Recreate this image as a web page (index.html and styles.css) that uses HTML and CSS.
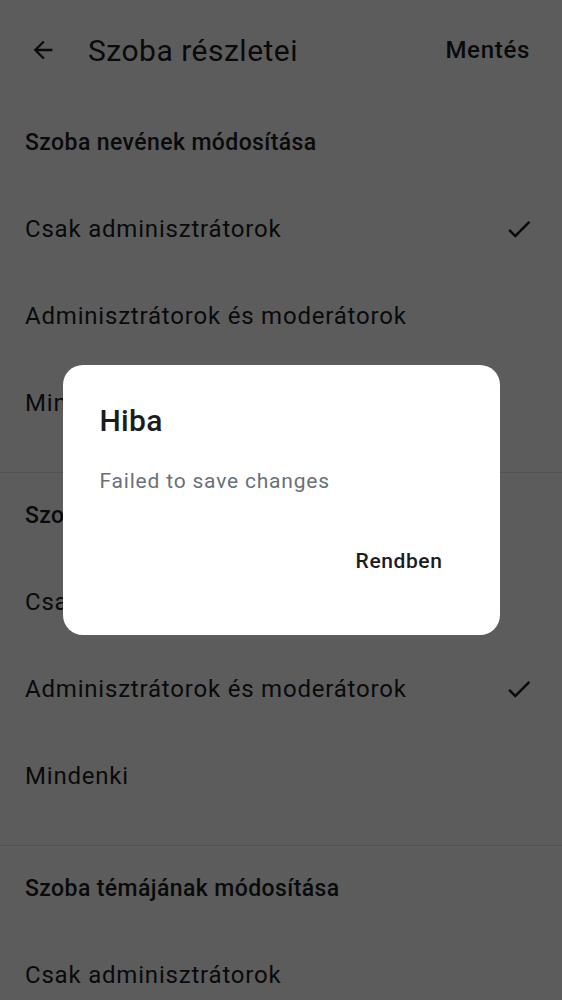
FILE: index.html
```html
<!DOCTYPE html>
<html lang="hu">
<head>
<meta charset="utf-8">
<link rel="stylesheet" href="styles.css">
</head>
<body>
<div class="page">
  <header class="topbar">
    <svg class="back" viewBox="0 0 24 24" width="28" height="28"><path d="M20 11H7.83l5.59-5.59L12 4l-8 8 8 8 1.41-1.41L7.83 13H20v-2z" fill="currentColor"/></svg>
    <h1 class="title">Szoba részletei</h1>
    <span class="save">Mentés</span>
  </header>

  <section class="group">
    <h2 class="group-title">Szoba nevének módosítása</h2>
    <div class="option"><span>Csak adminisztrátorok</span><svg class="check" viewBox="0 0 24 24" width="30" height="30"><path d="M9 16.17L4.83 12l-1.42 1.41L9 19 21 7l-1.41-1.41z" fill="currentColor"/></svg></div>
    <div class="option"><span>Adminisztrátorok és moderátorok</span></div>
    <div class="option"><span>Mindenki</span></div>
  </section>

  <section class="group">
    <h2 class="group-title">Szoba avatárjának módosítása</h2>
    <div class="option"><span>Csak adminisztrátorok</span></div>
    <div class="option"><span>Adminisztrátorok és moderátorok</span><svg class="check" viewBox="0 0 24 24" width="30" height="30"><path d="M9 16.17L4.83 12l-1.42 1.41L9 19 21 7l-1.41-1.41z" fill="currentColor"/></svg></div>
    <div class="option"><span>Mindenki</span></div>
  </section>

  <section class="group">
    <h2 class="group-title">Szoba témájának módosítása</h2>
    <div class="option"><span>Csak adminisztrátorok</span></div>
  </section>
</div>

<div class="scrim">
  <div class="dialog">
    <h3 class="dialog-title">Hiba</h3>
    <p class="dialog-text">Failed to save changes</p>
    <div class="dialog-actions"><span class="dialog-btn">Rendben</span></div>
  </div>
</div>
</body>
</html>
```

FILE: styles.css
```css
* { box-sizing: border-box; }
html, body { margin: 0; padding: 0; }
body {
  width: 562px;
  height: 1000px;
  overflow: hidden;
  background: #ffffff;
  font-family: Roboto, "Noto Sans", sans-serif;
  color: #1b1c1f;
}
.page { width: 562px; }
.topbar {
  height: 100px;
  display: flex;
  align-items: center;
  padding: 0 32px 0 29px;
}
.back { color: #1b1c1f; margin-right: 31px; }
.title {
  margin: 0;
  flex: 1;
  font-size: 30px;
  font-weight: 400;
  letter-spacing: 0.5px;
}
.save { font-size: 24px; font-weight: 500; letter-spacing: 0.7px; }
.group {
  border-bottom: 1px solid #e3e3e6;
  padding-bottom: 26px;
}
.group:last-child { border-bottom: none; }
.group-title {
  margin: 0;
  height: 85px;
  padding: 0 25px;
  display: flex;
  align-items: center;
  font-size: 23px;
  font-weight: 500;
  letter-spacing: 0.4px;
}
.option {
  height: 87px;
  display: flex;
  align-items: center;
  justify-content: space-between;
  padding: 0 28px 0 25px;
  font-size: 24px;
  letter-spacing: 0.8px;
}
.check { color: #1b1c1f; }
.scrim {
  position: fixed;
  inset: 0;
  background: rgba(0, 0, 0, 0.64);
  display: flex;
  align-items: flex-start;
  justify-content: center;
}
.dialog {
  margin-top: 365px;
  width: 437px;
  height: 270px;
  background: #ffffff;
  border-radius: 20px;
  padding: 38px 37px 0 37px;
}
.dialog-title {
  margin: 0;
  font-size: 30px;
  font-weight: 500;
  line-height: 36px;
  color: #1b1c1f;
  letter-spacing: 0.3px;
}
.dialog-text {
  margin: 28px 0 0;
  font-size: 21px;
  line-height: 28px;
  color: #6b7078;
  letter-spacing: 0.8px;
}
.dialog-actions {
  display: flex;
  justify-content: flex-end;
  margin-top: 52px;
  padding-right: 20px;
}
.dialog-btn {
  font-size: 21px;
  font-weight: 500;
  line-height: 28px;
  color: #1b1c1f;
  letter-spacing: 0.6px;
}
```
